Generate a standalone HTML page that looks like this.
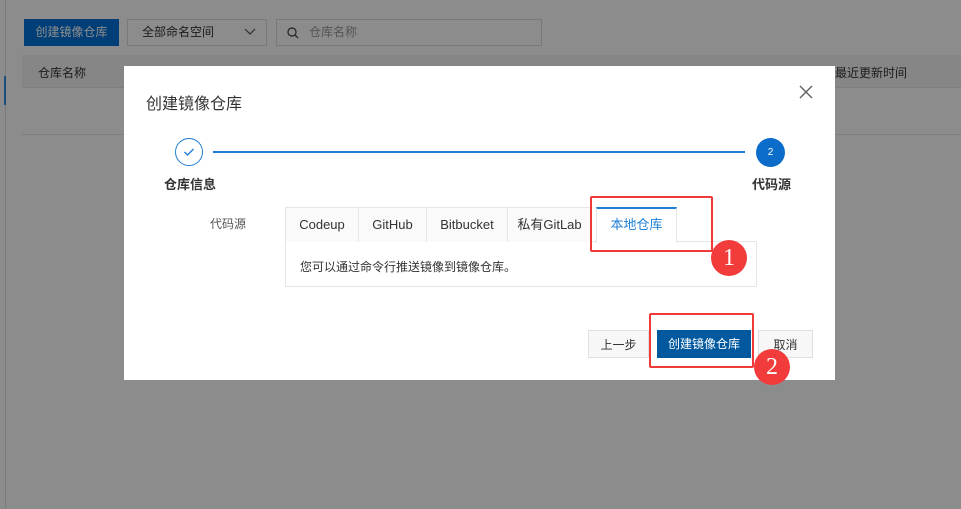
<!DOCTYPE html>
<html><head><meta charset="utf-8"><style>
*{margin:0;padding:0;box-sizing:border-box}
html,body{width:961px;height:509px;overflow:hidden;background:#fff}
body{font-family:"Liberation Sans","Noto Sans CJK SC",sans-serif;position:relative;font-size:12px}
.a{position:absolute}
.tab{position:absolute;top:207px;height:35px;border:1px solid #e6e6e6;border-bottom:none;background:#fafafa;color:#333;font-size:13px;line-height:34px;text-align:center}
.btn{position:absolute;top:330px;height:28px;line-height:28px;text-align:center;font-size:12px}
.rc{position:absolute;width:36px;height:36px;border-radius:50%;background:#f23b3b;color:#fff;font-family:"Liberation Serif",serif;font-size:24px;line-height:36px;text-align:center}
.rb{position:absolute;border:2px solid #f03a3a;border-radius:2px}
</style></head><body>
<div class="a" style="left:5px;top:0;width:1px;height:509px;background:#e0e0e0"></div>
<div class="a" style="left:4px;top:76px;width:2px;height:29px;background:#2f8fe6"></div>
<div class="a" style="left:24px;top:19px;width:95px;height:27px;background:#0072d9;color:#fff;line-height:27px;text-align:center">创建镜像仓库</div>
<div class="a" style="left:127px;top:19px;width:140px;height:27px;border:1px solid #dcdcdc;color:#333;line-height:25px;padding-left:14px">全部命名空间<svg class="a" style="right:10px;top:8px" width="12" height="8"><path d="M1 1l5 5 5-5" fill="none" stroke="#555" stroke-width="1.2"/></svg></div>
<div class="a" style="left:276px;top:19px;width:266px;height:27px;border:1px solid #dcdcdc;color:#999;line-height:25px;padding-left:32px">仓库名称
<svg class="a" style="left:10px;top:7px" width="12" height="12"><circle cx="5" cy="5" r="4" fill="none" stroke="#555" stroke-width="1.4"/><path d="M8 8l3 3" stroke="#555" stroke-width="1.4"/></svg></div>
<div class="a" style="left:22px;top:55px;width:939px;height:33px;background:#f5f5f5;border-bottom:1px solid #e6e6e6"></div>
<div class="a" style="left:38px;top:64px;color:#333">仓库名称</div>
<div class="a" style="left:835px;top:64px;color:#333">最近更新时间</div>
<div class="a" style="left:22px;top:134px;width:939px;height:1px;background:#e6e6e6"></div>

<div class="a" style="left:124px;top:66px;width:711px;height:314px;background:#fff;box-shadow:0 0 0 3000px rgba(0,0,0,.45)"></div>
<div class="a" style="left:146px;top:90px;font-size:16px;color:#333">创建镜像仓库</div>
<svg class="a" style="left:799px;top:85px" width="14" height="14"><path d="M1 1L13 13M13 1L1 13" stroke="#666" stroke-width="1.5"/></svg>
<div class="a" style="left:175px;top:138px;width:28px;height:28px;border:1px solid #1f7fd6;border-radius:50%"></div>
<svg class="a" style="left:183px;top:147px" width="12" height="10"><path d="M1.5 5L4.5 8L10.5 2" fill="none" stroke="#1f7fd6" stroke-width="1.4"/></svg>
<div class="a" style="left:213px;top:151px;width:532px;height:2px;background:#1f7fd6"></div>
<div class="a" style="left:756px;top:138px;width:29px;height:29px;border-radius:50%;background:#0b6cc9;color:#fff;font-size:10px;line-height:29px;text-align:center">2</div>
<div class="a" style="left:164px;top:174px;font-size:13px;font-weight:bold;color:#333">仓库信息</div>
<div class="a" style="left:752px;top:174px;font-size:13px;font-weight:bold;color:#333">代码源</div>
<div class="a" style="left:210px;top:215px;color:#555">代码源</div>
<div class="a" style="left:285px;top:241px;width:472px;height:46px;border:1px solid #e6e6e6"></div>
<div class="tab" style="left:285px;width:74px">Codeup</div>
<div class="tab" style="left:358px;width:69px">GitHub</div>
<div class="tab" style="left:426px;width:82px">Bitbucket</div>
<div class="tab" style="left:507px;width:85px">私有GitLab</div>
<div class="tab" style="left:596px;width:81px;height:36px;background:#fff;border-top:2px solid #1f7fd6;color:#1f7fd6;line-height:32px">本地仓库</div>
<div class="a" style="left:300px;top:258px;color:#333">您可以通过命令行推送镜像到镜像仓库。</div>
<div class="btn" style="left:588px;width:61px;background:#f7f7f7;border:1px solid #e0e0e0;color:#333">上一步</div>
<div class="btn" style="left:657px;width:94px;background:#00589f;color:#fff">创建镜像仓库</div>
<div class="btn" style="left:758px;width:55px;background:#f7f7f7;border:1px solid #e0e0e0;color:#333">取消</div>
<div class="rb" style="left:590px;top:196px;width:123px;height:56px"></div>
<div class="rb" style="left:649px;top:313px;width:105px;height:55px"></div>
<div class="rc" style="left:711px;top:240px">1</div>
<div class="rc" style="left:754px;top:349px">2</div>
</body></html>
